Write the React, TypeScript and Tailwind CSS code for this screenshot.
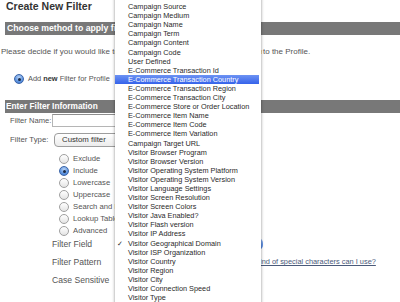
import React from "react";

const menuItems = [
  "Referral",
  "Campaign Source",
  "Campaign Medium",
  "Campaign Name",
  "Campaign Term",
  "Campaign Content",
  "Campaign Code",
  "User Defined",
  "E-Commerce Transaction Id",
  "E-Commerce Transaction Country",
  "E-Commerce Transaction Region",
  "E-Commerce Transaction City",
  "E-Commerce Store or Order Location",
  "E-Commerce Item Name",
  "E-Commerce Item Code",
  "E-Commerce Item Variation",
  "Campaign Target URL",
  "Visitor Browser Program",
  "Visitor Browser Version",
  "Visitor Operating System Platform",
  "Visitor Operating System Version",
  "Visitor Language Settings",
  "Visitor Screen Resolution",
  "Visitor Screen Colors",
  "Visitor Java Enabled?",
  "Visitor Flash version",
  "Visitor IP Address",
  "Visitor Geographical Domain",
  "Visitor ISP Organization",
  "Visitor Country",
  "Visitor Region",
  "Visitor City",
  "Visitor Connection Speed",
  "Visitor Type",
  "Visitor Hostname",
];

const filterTypes = ["Exclude", "Include", "Lowercase", "Uppercase", "Search and Replace", "Lookup Table", "Advanced"];

function Radio({ checked }: { checked?: boolean }) {
  if (checked) {
    return (
      <span className="flex h-[10px] w-[10px] shrink-0 items-center justify-center rounded-full border border-[#3a64a8] bg-[radial-gradient(circle_at_50%_30%,#b9d3f5_0%,#5f95e0_60%,#3f72c6_100%)]">
        <span className="h-[3px] w-[3px] rounded-full bg-[#1b2a44]" />
      </span>
    );
  }
  return (
    <span className="h-[10px] w-[10px] shrink-0 rounded-full border border-[#a0a0a0] bg-[linear-gradient(180deg,#ffffff_0%,#e4e4e4_100%)]" />
  );
}

export default function App() {
  return (
    <div className="relative h-[302px] w-[400px] overflow-hidden bg-white font-['Liberation_Sans',Arial,sans-serif] text-[#555]">
      <h1 className="h-[22px] pl-[6px] text-[10.5px] font-bold leading-[12px] text-[#333]">Create New Filter</h1>

      <div className="ml-[5px] h-[13px] bg-[#787878] pl-[2px] text-[8.7px] font-bold leading-[13px] text-white">
        Choose method to apply filter to Profile
      </div>

      <p className="mt-[12px] flex h-[10px] whitespace-nowrap pl-[1px] text-[8px] leading-[10px]">
        <span className="w-[261px] shrink-0 overflow-hidden">
          Please decide if you would like to add a new filter or apply an existing filter
        </span>
        <span className="pl-[1px]">to the Profile.</span>
      </p>

      <div className="mt-[17px] flex h-[10px] items-center gap-[4px] pl-[14px] text-[7.4px]">
        <Radio checked />
        <span>
          Add <b className="text-[#333]">new</b> Filter for Profile
        </span>
      </div>

      <div className="ml-[5px] mt-[16px] h-[13px] bg-[#787878] pl-[1px] text-[8.3px] font-bold leading-[13px] text-white">
        Enter Filter Information
      </div>

      <div className="mt-[1px] flex h-[13px] items-center text-[7.6px]">
        <span className="w-[52px] shrink-0 whitespace-nowrap pl-[10px]">Filter Name:</span>
        <span className="h-[13px] w-[160px] border border-[#b5b5b5] border-t-[#8e8e8e] bg-white" />
      </div>

      <div className="mt-[6px] flex h-[14px] items-center text-[7.8px]">
        <span className="w-[54px] shrink-0 whitespace-nowrap pl-[10px]">Filter Type:</span>
        <span className="flex h-[14px] w-[90px] items-center rounded-[4px] border border-[#9d9d9d] bg-[linear-gradient(180deg,#ffffff_0%,#ececec_100%)] pl-[7px] text-[#333]">
          Custom filter
        </span>
      </div>

      <div className="mt-[6px] flex flex-col">
        {filterTypes.map((t) => (
          <div key={t} className="flex h-[12px] items-center gap-[4px] whitespace-nowrap pl-[59px] text-[7.7px]">
            <Radio checked={t === "Include"} />
            <span>{t}</span>
          </div>
        ))}
      </div>

      <div className="mt-[1px] flex h-[12px] items-center pl-[52px] text-[8.6px]">Filter Field</div>
      <div className="mt-[6px] flex h-[12px] items-center text-[8.6px]">
        <span className="w-[237px] shrink-0 pl-[52px]">Filter Pattern</span>
        <a className="whitespace-nowrap text-[7.4px] text-[#4a5a7a] underline">What kind of special characters can I use?</a>
      </div>
      <div className="mt-[6px] flex h-[12px] items-center pl-[52px] text-[8.6px]">Case Sensitive</div>

      <span className="absolute left-[249px] top-[238px] h-[12px] w-[14px] rounded-[5px] bg-[linear-gradient(180deg,#8fb4f0_0%,#3f78dc_100%)]" />

      <div className="absolute left-[115px] top-[-7px] z-10 w-[146px] bg-white shadow-[0_0_3px_rgba(0,0,0,0.45)]">
        {menuItems.map((item) => {
          const selected = item === "E-Commerce Transaction Country";
          const checked = item === "Visitor Geographical Domain";
          return (
            <div
              key={item}
              className={`relative h-[9.1px] whitespace-nowrap pl-[13px] text-[7.3px] leading-[9.1px] ${
                selected ? "mr-[2px] bg-[linear-gradient(180deg,#6d93f3_0%,#3562ea_100%)] text-white" : "text-[#2a2a2a]"
              }`}
            >
              {checked && <span className="absolute left-[2px] top-0 text-[7px]">✓</span>}
              {item}
            </div>
          );
        })}
      </div>
    </div>
  );
}
